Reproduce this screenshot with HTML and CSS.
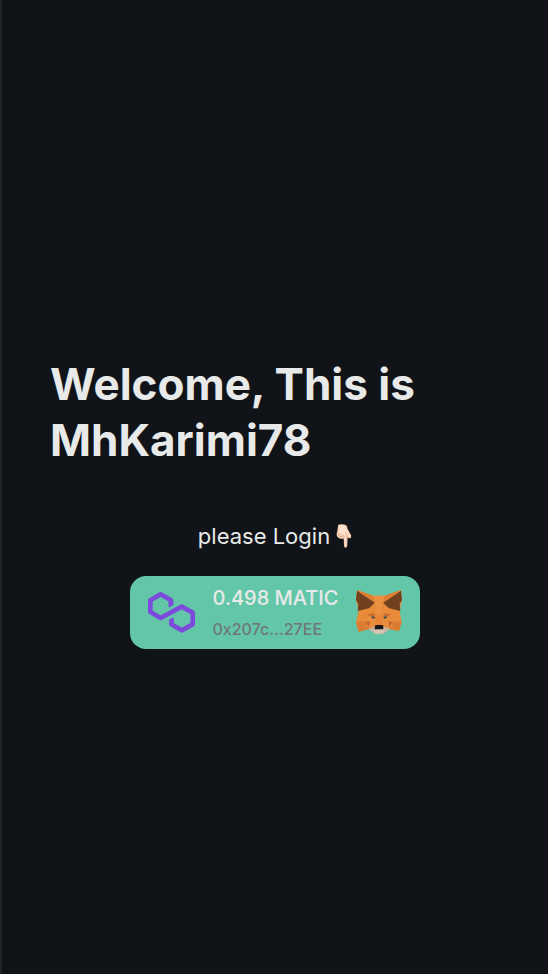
FILE: index.html
```html
<!DOCTYPE html>
<html lang="en">
<head>
<meta charset="utf-8">
<meta name="viewport" content="width=device-width, initial-scale=1">
<title>MhKarimi78</title>
<link rel="stylesheet" href="styles.css">
</head>
<body>
<main class="page">
  <h1 class="title">Welcome, This is MhKarimi78</h1>
  <p class="prompt">
    <span>please Login</span>
    <svg class="hand" viewBox="0 0 48 74" aria-hidden="true">
      <path fill="#f3c9ad" d="M6 2Q20-2 31 4Q35 8 35 15L45 33Q48 39 44 43Q40 46 35 42L34 68Q33 73 29 73Q25 73 24 68L23 45Q18 48 14 45Q8 46 6 41Q1 40 2 33Q0 29 3 25Z"/>
      <path fill="#ffe0ca" d="M9 4Q20 1 28 6L33 20L43 37Q43 42 38 40L30 33L31 67Q29 70 27 67L25 36Q17 39 13 33Q7 34 7 27Z"/>
      <path fill="none" stroke="#d99b7b" stroke-width="2" d="M5 31Q11 35 15 29M12 39Q19 40 22 33M24 43V34M28 25L36 39"/>
    </svg>
  </p>
  <button class="wallet" type="button">
    <svg class="polygon" viewBox="0 0 141 123" aria-hidden="true">
      <path fill="none" stroke="#7c4bdc" stroke-width="14" stroke-linejoin="round" d="M69 40V25L38 7L7 25V60L38 78L101 44L134 62V97L101 115L70 97V82"/>
      <path fill="#7c4bdc" d="M62 47L76 39V30H62ZM63 84L77 76V91H63Z"/>
    </svg>
    <span class="details">
      <span class="balance">0.498 MATIC</span>
      <span class="address">0x207c...27EE</span>
    </span>
    <svg class="fox" viewBox="0 0 138 132" aria-hidden="true">
      <path fill="#e88c3a" d="M3 0L52 17H86L135 0L138 30L131 63L137 96L129 123L99 117L82 130H56L40 117L8 125L0 96L8 63L0 30Z"/>
      <path fill="#70401f" d="M3 2L57 38L39 55L5 63L7 42L0 30ZM135 2L81 38L99 55L133 63L131 42L138 30Z"/>
      <path fill="#df7e31" d="M3 0L52 17L57 38ZM135 0L86 17L81 38Z"/>
      <path fill="#ea9040" d="M52 17H86L81 38L79 70H59L57 38Z"/>
      <path fill="#da7d33" d="M0 96L40 94L28 105L40 117L8 125ZM137 96L99 94L111 105L99 117L129 123Z"/>
      <path fill="#c9692c" d="M28 96L43 94L39 112ZM110 96L96 94L100 112ZM32 74L52 69L60 84ZM106 74L87 69L79 84Z"/>
      <path fill="#e88435" d="M60 84L69 74L79 84L83 106H56Z"/>
      <path fill="#e98d3f" d="M43 94L61 88L57 107L40 117ZM96 94L78 88L82 107L99 117Z"/>
      <path fill="#c9b5a6" d="M38 117L54 110H84L101 117L82 131H56Z"/>
      <path fill="#d8c4b4" d="M54 118H84V127L78 131H60L54 127Z"/>
      <path fill="#161616" d="M57 107L60 105H78L82 107V118H56Z"/>
      <path fill="#d7965b" d="M43 79L50 77L60 85L44 84ZM96 79L89 77L79 85L95 84Z"/>
      <path fill="#263c4b" d="M46 79L54 80L57 86L48 84ZM93 79L85 80L82 86L91 84Z"/>
    </svg>
  </button>
</main>
</body>
</html>
```
FILE: styles.css
```css
* {
  box-sizing: border-box;
}

body {
  margin: 0;
  background: #101419;
  color: #e8eae9;
  font-family: Inter, "Liberation Sans", sans-serif;
}

.page {
  min-height: 100vh;
  padding: 78px 48px 48px;
  border-left: 2px solid #202326;
  display: flex;
  flex-direction: column;
  align-items: center;
  justify-content: center;
}

.title {
  margin: 0;
  padding-bottom: 48px;
  width: 100%;
  font-size: 44px;
  line-height: 56px;
  font-weight: 700;
}

.prompt {
  display: flex;
  align-items: center;
  gap: 6px;
  margin: 4px 0 24px;
  font-size: 22px;
  line-height: 32px;
}

.hand {
  width: 16px;
  height: 24px;
}

.wallet {
  display: flex;
  align-items: center;
  gap: 18px;
  padding: 8px 18px;
  border: 0;
  border-radius: 16px;
  background: #63c6a8;
  color: inherit;
  font: inherit;
  text-align: left;
  cursor: pointer;
}

.polygon {
  width: 47px;
  height: 41px;
}

.details {
  display: flex;
  flex-direction: column;
  gap: 5px;
}

.balance {
  font-size: 20px;
  line-height: 28px;
  font-weight: 500;
}

.address {
  color: #6f7678;
  font-size: 16px;
  line-height: 24px;
  font-weight: 500;
}

.fox {
  width: 46px;
  height: 44px;
}
```
